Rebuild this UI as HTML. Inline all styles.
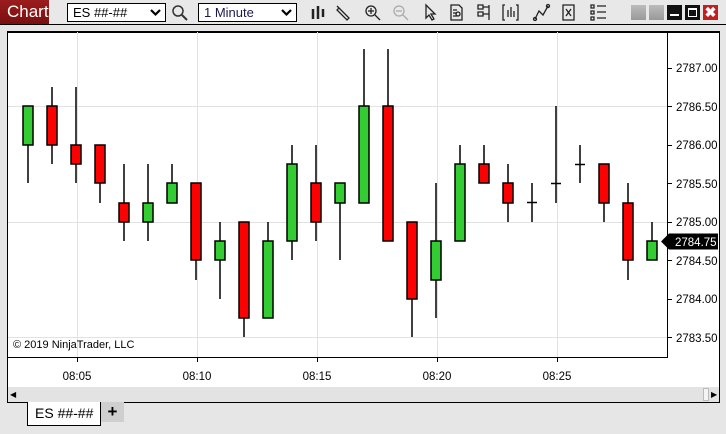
<!DOCTYPE html>
<html><head><meta charset="utf-8"><style>
*{margin:0;padding:0;box-sizing:border-box}
body{width:726px;height:434px;background:#e6e6e6;font-family:"Liberation Sans",sans-serif;position:relative;overflow:hidden}
.abs{position:absolute}
.chev{position:absolute;right:4px;top:5px}
</style></head><body>
<div class="abs" style="left:0;top:0;width:726px;height:25px;background:#e8e8e8"></div>
<div class="abs" style="left:0;top:0;width:49px;height:24px;background:linear-gradient(#9b1c1c,#7a1010);color:#fff;font-size:17px;line-height:24px;padding-left:7px">Chart</div>
<div class="abs" style="left:67px;top:3px;width:99px;height:19px;border:1px solid #000;background:#fff;font-size:13px;line-height:17px;padding-left:5px">ES ##-##<svg class="chev" width="11" height="8"><path d="M1 1l4.5 4.5L10 1" fill="none" stroke="#000" stroke-width="2.2"/></svg></div>
<svg class="abs" style="left:170px;top:3px" width="20" height="20"><circle cx="8" cy="8" r="5" fill="none" stroke="#333" stroke-width="1.5"/><line x1="12" y1="12" x2="17" y2="17" stroke="#333" stroke-width="2"/></svg>
<div class="abs" style="left:198px;top:3px;width:99px;height:19px;border:1px solid #000;background:#fff;font-size:13px;line-height:17px;padding-left:5px;color:#1a1a50">1 Minute<svg class="chev" width="11" height="8"><path d="M1 1l4.5 4.5L10 1" fill="none" stroke="#000" stroke-width="2.2"/></svg></div>
<svg class="abs" style="left:305px;top:0" width="420" height="25" fill="none" stroke="#222" stroke-width="1.3">
<g stroke-width="2.5"><line x1="8" y1="9" x2="8" y2="19"/><line x1="13" y1="6" x2="13" y2="19"/><line x1="18" y1="9" x2="18" y2="17"/></g>
<path d="M34 8l10 10-2 2-10-10z M32 6l2 2"/>
<circle cx="66" cy="11" r="5"/><line x1="70" y1="15" x2="75" y2="20"/><line x1="63" y1="11" x2="69" y2="11"/><line x1="66" y1="8" x2="66" y2="14"/>
<g stroke="#aaa"><circle cx="94" cy="11" r="5"/><line x1="98" y1="15" x2="103" y2="20"/><line x1="91" y1="11" x2="97" y2="11"/></g>
<path d="M121 5l0 13 3-3 3 5 2-1-3-5 4 0z"/>
<path d="M146 5h8l3 3v12h-11z M148 10h4 M148 13h4 M148 16h4"/><circle cx="153" cy="14" r="2"/>
<path d="M173 5h5v4h-5z M173 12h5v4h-5z M178 7h6 M178 14h6 M184 5v15"/>
<path d="M200 5h-2v15h2 M211 5h2v15h-2 M203 10v7 M206 7v10 M209 11v6"/>
<path d="M230 19l4-8 4 4 5-9"/><circle cx="230" cy="19" r="1.5"/><circle cx="243" cy="6" r="1.5"/>
<path d="M258 5h11v15h-11z M261 9l5 7 M266 9l-5 7"/>
<path d="M286 5h3v3h-3z M286 11h3v3h-3z M286 17h3v3h-3z M292 6h9 M292 12h9 M292 18h9"/>
</svg>
<div class="abs" style="left:631px;top:5px;width:15px;height:15px;background:linear-gradient(#bbb,#999)"></div>
<div class="abs" style="left:649px;top:5px;width:15px;height:15px;background:linear-gradient(#bbb,#999)"></div>
<div class="abs" style="left:667px;top:5px;width:15px;height:15px;background:#111"><div class="abs" style="left:3px;top:9px;width:9px;height:2px;background:#fff"></div></div>
<div class="abs" style="left:685px;top:5px;width:15px;height:15px;background:#111"><div class="abs" style="left:3px;top:3px;width:9px;height:9px;border:1.5px solid #fff;border-top-width:2.5px"></div></div>
<div class="abs" style="left:703px;top:5px;width:15px;height:15px;background:#c02020;color:#fff;font-size:14px;font-weight:bold;line-height:15px;text-align:center">&#10006;</div>
<div class="abs" style="left:0;top:24px;width:726px;height:1px;background:#000"></div>
<div class="abs" style="left:7px;top:31px;width:713px;height:372px;background:#fff;border:1px solid #000;border-top:2px solid #000"></div>
<svg class="abs" style="left:0;top:0" width="726" height="434">
<g stroke="#e2e2e2" stroke-width="1"><line x1="8" y1="106.5" x2="667" y2="106.5"/><line x1="8" y1="222.5" x2="667" y2="222.5"/><line x1="8" y1="337.5" x2="667" y2="337.5"/>
<line x1="77.5" y1="32" x2="77.5" y2="357"/><line x1="197.5" y1="32" x2="197.5" y2="357"/><line x1="317.5" y1="32" x2="317.5" y2="357"/><line x1="437.5" y1="32" x2="437.5" y2="357"/><line x1="557.5" y1="32" x2="557.5" y2="357"/></g>
<line x1="667.5" y1="32" x2="667.5" y2="357" stroke="#000"/><line x1="8" y1="357.5" x2="668" y2="357.5" stroke="#000"/>
<g stroke="#000"><line x1="667" y1="68.5" x2="672" y2="68.5"/><line x1="667" y1="106.5" x2="672" y2="106.5"/><line x1="667" y1="145.5" x2="672" y2="145.5"/><line x1="667" y1="183.5" x2="672" y2="183.5"/><line x1="667" y1="222.5" x2="672" y2="222.5"/><line x1="667" y1="260.5" x2="672" y2="260.5"/><line x1="667" y1="299.5" x2="672" y2="299.5"/><line x1="667" y1="337.5" x2="672" y2="337.5"/>
<line x1="77.5" y1="357" x2="77.5" y2="362"/><line x1="197.5" y1="357" x2="197.5" y2="362"/><line x1="317.5" y1="357" x2="317.5" y2="362"/><line x1="437.5" y1="357" x2="437.5" y2="362"/><line x1="557.5" y1="357" x2="557.5" y2="362"/></g>
<g font-family="Liberation Sans" font-size="11.5" fill="#000"><text x="676" y="72">2787.00</text><text x="676" y="111">2786.50</text><text x="676" y="149">2786.00</text><text x="676" y="188">2785.50</text><text x="676" y="226">2785.00</text><text x="676" y="265">2784.50</text><text x="676" y="303">2784.00</text><text x="676" y="342">2783.50</text>
<text x="77" y="380" text-anchor="middle">08:05</text><text x="197" y="380" text-anchor="middle">08:10</text><text x="317" y="380" text-anchor="middle">08:15</text><text x="437" y="380" text-anchor="middle">08:20</text><text x="557" y="380" text-anchor="middle">08:25</text>
<text x="13" y="348" font-size="11">© 2019 NinjaTrader, LLC</text></g>
<path d="M661 241.5l8-8h49v16h-49z" fill="#000"/><text x="675" y="246" font-family="Liberation Sans" font-size="11.5" fill="#fff">2784.75</text>
<g stroke="#000" stroke-width="1.5">
<line x1="28" y1="106" x2="28" y2="183"/><rect x="23" y="106" width="10" height="39" fill="#33cc33"/>
<line x1="52" y1="87" x2="52" y2="164"/><rect x="47" y="106" width="10" height="39" fill="#f00"/>
<line x1="76" y1="87" x2="76" y2="183"/><rect x="71" y="145" width="10" height="19" fill="#f00"/>
<line x1="100" y1="145" x2="100" y2="203"/><rect x="95" y="145" width="10" height="38" fill="#f00"/>
<line x1="124" y1="164" x2="124" y2="241"/><rect x="119" y="203" width="10" height="19" fill="#f00"/>
<line x1="148" y1="164" x2="148" y2="241"/><rect x="143" y="203" width="10" height="19" fill="#33cc33"/>
<line x1="172" y1="164" x2="172" y2="203"/><rect x="167" y="183" width="10" height="20" fill="#33cc33"/>
<line x1="196" y1="183" x2="196" y2="280"/><rect x="191" y="183" width="10" height="77" fill="#f00"/>
<line x1="220" y1="222" x2="220" y2="299"/><rect x="215" y="241" width="10" height="19" fill="#33cc33"/>
<line x1="244" y1="222" x2="244" y2="337"/><rect x="239" y="222" width="10" height="96" fill="#f00"/>
<line x1="268" y1="222" x2="268" y2="318"/><rect x="263" y="241" width="10" height="77" fill="#33cc33"/>
<line x1="292" y1="145" x2="292" y2="260"/><rect x="287" y="164" width="10" height="77" fill="#33cc33"/>
<line x1="316" y1="145" x2="316" y2="241"/><rect x="311" y="183" width="10" height="39" fill="#f00"/>
<line x1="340" y1="183" x2="340" y2="260"/><rect x="335" y="183" width="10" height="20" fill="#33cc33"/>
<line x1="364" y1="49" x2="364" y2="203"/><rect x="359" y="106" width="10" height="97" fill="#33cc33"/>
<line x1="388" y1="49" x2="388" y2="241"/><rect x="383" y="106" width="10" height="135" fill="#f00"/>
<line x1="412" y1="222" x2="412" y2="337"/><rect x="407" y="222" width="10" height="77" fill="#f00"/>
<line x1="436" y1="183" x2="436" y2="318"/><rect x="431" y="241" width="10" height="39" fill="#33cc33"/>
<line x1="460" y1="145" x2="460" y2="241"/><rect x="455" y="164" width="10" height="77" fill="#33cc33"/>
<line x1="484" y1="145" x2="484" y2="183"/><rect x="479" y="164" width="10" height="19" fill="#f00"/>
<line x1="508" y1="164" x2="508" y2="222"/><rect x="503" y="183" width="10" height="20" fill="#f00"/>
<line x1="532" y1="183" x2="532" y2="222"/><line x1="527" y1="202.5" x2="537" y2="202.5"/>
<line x1="556" y1="106" x2="556" y2="203"/><line x1="551" y1="183.5" x2="561" y2="183.5"/>
<line x1="580" y1="145" x2="580" y2="183"/><line x1="575" y1="164.5" x2="585" y2="164.5"/>
<line x1="604" y1="164" x2="604" y2="222"/><rect x="599" y="164" width="10" height="39" fill="#f00"/>
<line x1="628" y1="183" x2="628" y2="280"/><rect x="623" y="203" width="10" height="57" fill="#f00"/>
<line x1="652" y1="222" x2="652" y2="260"/><rect x="647" y="241" width="10" height="19" fill="#33cc33"/>
</g>
</svg>
<div class="abs" style="left:8px;top:387px;width:711px;height:15px;background:#e3e3e3"></div>
<div class="abs" style="left:10px;top:390px;font-size:8px">&#9664;</div>
<div class="abs" style="left:703px;top:388px;width:6px;height:13px;border:1px solid #bbb;background:#f4f4f4"></div>
<div class="abs" style="left:711px;top:390px;font-size:8px">&#9654;</div>
<div class="abs" style="left:27px;top:402px;width:74px;height:24px;background:#fff;border:1px solid #000;border-top:none;font-size:14px;line-height:22px;padding-left:7px">ES ##-##</div>
<div class="abs" style="left:101px;top:402px;width:23px;height:20px;background:#cfcfcf;font-size:17px;font-weight:bold;line-height:20px;text-align:center">+</div>
</body></html>
